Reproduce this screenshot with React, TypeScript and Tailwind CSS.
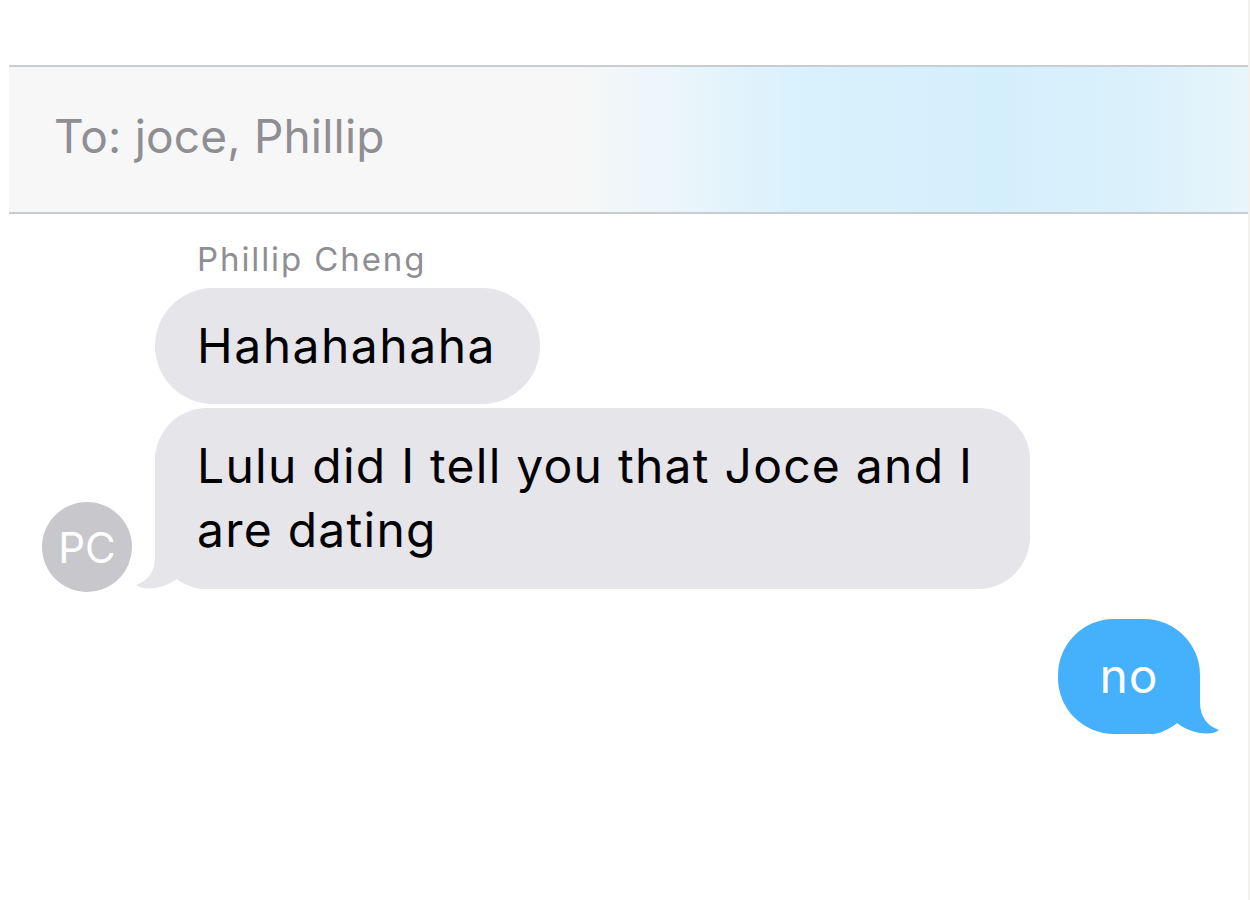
const font = { fontFamily: "Inter, 'Noto Sans', sans-serif" };

const GrayTail = () => (
    <svg
        className="absolute left-[-20px] bottom-0"
        width="70"
        height="56"
        viewBox="0 0 70 56"
    >
        <path
            d="M20 0 L20 24 C20 40 12 48 1 52 C4 54.5 8 55.5 13 55.5 C25 55.5 35 51 43 45 C51 51 59 55.5 68 56 L70 56 L70 0 Z"
            fill="#e5e5ea"
        />
    </svg>
);

const BlueTail = () => (
    <svg
        className="absolute right-[-20px] bottom-0"
        width="70"
        height="56"
        viewBox="0 0 70 56"
    >
        <path
            d="M50 0 L50 24 C50 40 58 48 69 52 C66 54.5 62 55.5 57 55.5 C45 55.5 35 51 27 45 C19 51 11 55.5 2 56 L0 56 L0 0 Z"
            fill="#45b0fc"
        />
    </svg>
);

const App = () => {
    return (
        <div className="w-[1250px] h-[900px] bg-white relative overflow-hidden" style={font}>
            {/* recipients bar */}
            <div className="pt-[65px] pl-[9px]">
                <div className="w-[1240px] h-[149px] border-y-2 border-[#c9cdd0] bg-[linear-gradient(90deg,#f7f7f7_0%,#f7f7f7_46%,#eaf5fb_54%,#d8f1fc_64%,#d4effc_80%,#dbf1fb_92%,#e8f5fb_100%)] flex items-center pl-[45px] pb-[6px]">
                    <span className="text-[46px] text-[#8e8e93] tracking-[0.2px]">
                        To: joce, Phillip
                    </span>
                </div>
            </div>

            {/* conversation */}
            <div className="flex flex-col pt-[25px]">
                <div className="pl-[197px] text-[33px] leading-[40px] text-[#8e8e93] tracking-[1.9px]">
                    Phillip Cheng
                </div>

                <div className="flex flex-row items-end gap-[23px] pl-[42px] mt-[9px]">
                    <div className="w-[90px] h-[90px] rounded-full bg-[#c7c7cc] flex items-center justify-center text-white text-[42px] mb-[-3px]">
                        PC
                    </div>
                    <div className="flex flex-col items-start gap-[4px]">
                        <div className="h-[116px] w-[385px] rounded-[58px] bg-[#e5e5ea] flex items-center pl-[42px] text-[48px] tracking-[1.5px] text-black">
                            Hahahahaha
                        </div>
                        <div className="relative w-[875px] h-[181px] rounded-[52px] bg-[#e5e5ea] pl-[42px] pt-[26px] text-[48px] leading-[64px] tracking-[1.25px] text-black">
                            <GrayTail />
                            <span className="relative">
                                Lulu did I tell you that Joce and I
                                <br />
                                are dating
                            </span>
                        </div>
                    </div>
                </div>

                <div className="flex flex-row justify-end pr-[50px] mt-[30px]">
                    <div className="relative w-[142px] h-[115px] rounded-[56px] bg-[#45b0fc] flex items-center justify-center text-white text-[48px] tracking-[1px]">
                        <BlueTail />
                        <span className="relative pb-[2px]">no</span>
                    </div>
                </div>
            </div>

            <div className="absolute right-0 top-0 w-[2px] h-[900px] bg-[#f3f1ee]" />
        </div>
    );
};

export default App;
